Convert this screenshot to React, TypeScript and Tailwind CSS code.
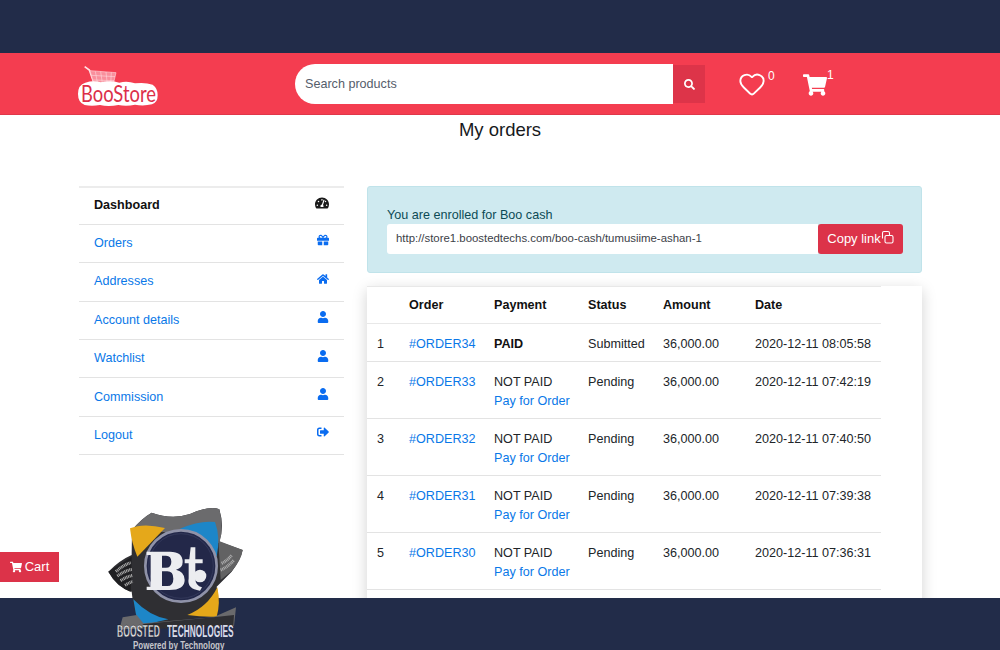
import { FaTachometerAlt, FaGift, FaHome, FaUser, FaSignOutAlt, FaShoppingCart, FaSearch } from "react-icons/fa";
import { Heart } from "lucide-react";

const nav = [
  { label: "Orders", Icon: FaGift },
  { label: "Addresses", Icon: FaHome },
  { label: "Account details", Icon: FaUser },
  { label: "Watchlist", Icon: FaUser },
  { label: "Commission", Icon: FaUser },
  { label: "Logout", Icon: FaSignOutAlt },
];

const orders = [
  ["1", "#ORDER34", "PAID", "Submitted", "2020-12-11 08:05:58"],
  ["2", "#ORDER33", "NOT PAID", "Pending", "2020-12-11 07:42:19"],
  ["3", "#ORDER32", "NOT PAID", "Pending", "2020-12-11 07:40:50"],
  ["4", "#ORDER31", "NOT PAID", "Pending", "2020-12-11 07:39:38"],
  ["5", "#ORDER30", "NOT PAID", "Pending", "2020-12-11 07:36:31"],
];

function StoreLogo() {
  return (
    <div className="relative w-[100px] h-[50px] shrink-0 mt-[2px]">
      <svg viewBox="0 0 300 150" className="absolute inset-0 w-[100px] h-[50px]">
        <path d="M44 20 L58 30 L78 86" fill="none" stroke="#ffe3e6" strokeWidth="5" />
        <path d="M60 32 L138 38 L130 72 L74 80 Z" fill="#f98f9c" stroke="#ffd0d6" strokeWidth="2" />
        <path d="M76 34 L84 78 M92 35 L98 76 M108 36 L112 74 M124 37 L122 73 M64 46 L135 50 M68 60 L132 62" fill="none" stroke="#ffe3e6" strokeWidth="1.5" />
        <path d="M46 68 Q70 60 92 67 Q120 60 148 68 Q172 62 195 70 Q225 66 248 74 Q264 86 263 106 Q263 128 246 133 Q220 139 195 134 Q170 140 145 135 Q115 141 90 135 Q65 140 44 135 Q24 128 24 102 Q24 74 46 68 Z" fill="#ffffff" />
      </svg>
      <span className="absolute left-[11px] top-[21px] text-[23px] leading-[24px] text-[#dc2f49] font-['Lato',sans-serif] scale-x-[0.8] origin-left whitespace-nowrap">BooStore</span>
    </div>
  );
}

function BoostedLogo() {
  return (
    <div className="absolute left-[100px] top-[500px] w-[150px] h-[150px] z-20 overflow-hidden">
      <svg viewBox="0 0 450 450" className="absolute inset-0 w-[150px] h-[150px]">
        <path d="M96 90 Q125 55 155 38 Q215 60 270 42 Q330 16 358 28 Q374 80 358 125 L428 150 Q422 180 395 215 L350 260 Q360 300 352 345 L120 380 Q100 330 95 275 Q50 262 25 215 Q60 180 95 165 Z" fill="#2f2f33" />
        <path d="M96 90 Q125 55 155 38 Q215 60 270 42 Q330 16 358 28 Q372 80 358 130 L250 100 Z" fill="#6b6b6d" />
        <path d="M355 122 L428 150 Q424 180 396 212 L362 240 Z" fill="#626263" />
        <path d="M95 170 L25 215 Q50 258 92 276 Z" fill="#1f1f22" />
        <g fill="none" stroke="#b0b0b0" strokeWidth="9" strokeDasharray="3 2">
          <path d="M48 215 Q70 195 92 188" />
          <path d="M52 228 Q75 212 96 208" />
          <path d="M62 242 Q80 230 98 226" />
          <path d="M75 256 Q88 248 98 244" />
          <path d="M365 190 Q385 180 395 165" />
          <path d="M362 210 Q385 200 402 180" />
        </g>
        <path d="M90 85 Q130 68 195 84 L112 170 Q95 130 90 85 Z" fill="#e5a81a" />
        <path d="M240 86 Q300 60 345 66 Q362 110 350 170 Q305 102 240 86 Z" fill="#1d86c8" />
        <path d="M100 298 Q150 350 205 358 L118 378 Q105 340 100 298 Z" fill="#1d86c8" />
        <path d="M352 262 Q362 310 350 350 Q310 352 262 345 Q322 322 352 262 Z" fill="#e5a81a" />
        <path d="M68 352 L110 345 L130 370 L340 352 L408 322 L402 378 L58 388 Z" fill="#6a6a6c" />
        <path d="M130 372 L340 352 L402 345 L400 378 L130 388 Z" fill="#2f2f33" />
        <circle cx="243" cy="198" r="107" fill="#222749" stroke="#8f92a8" strokeWidth="8" />
        <circle cx="243" cy="198" r="97" fill="#232849" stroke="#3d4264" strokeWidth="2" />
        <path d="M140 155 H210 Q248 155 248 186 Q248 204 228 209 Q254 215 254 240 Q254 270 208 270 H140 V260 H152 V165 H140 Z M186 167 V203 H198 Q214 203 214 185 Q214 167 198 167 Z M186 214 V258 H202 Q220 258 220 236 Q220 214 202 214 Z" fill="#ecedf0" fillRule="evenodd" />
        <path d="M272 142 H286 V178 H308 V190 H286 V236 Q286 256 306 262 L300 272 Q260 268 266 235 V190 H254 V178 H268 Z" fill="#ecedf0" />
        <circle cx="300" cy="228" r="19" fill="#ecedf0" />
      </svg>
      <span className="absolute left-[17px] top-[123px] w-[62px] text-[16px] leading-[18px] font-bold text-[#e9e9ee] font-['Liberation_Sans',sans-serif] scale-x-[0.53] origin-left whitespace-nowrap tracking-[0.3px] [-webkit-text-stroke:0.4px_#111]">BOOSTED</span>
      <span className="absolute left-[67px] top-[123px] w-[70px] text-[16px] leading-[18px] font-bold text-[#d9dbe8] font-['Liberation_Sans',sans-serif] scale-x-[0.52] origin-left whitespace-nowrap">TECHNOLOGIES</span>
      <span className="absolute left-[33px] top-[141px] text-[10px] leading-[10px] font-bold text-[#c6c6cc] font-['Liberation_Sans',sans-serif] scale-x-[0.8] origin-left whitespace-nowrap">Powered by Technology</span>
    </div>
  );
}

export default function App() {
  return (
    <div className="relative h-[650px] w-[1000px] overflow-hidden flex flex-col bg-white font-['Liberation_Sans',sans-serif] text-[12.6px] text-[#212529]">
      <div className="h-[53px] shrink-0 bg-[#222c49]" />
      <header className="h-[62px] shrink-0 bg-[#f43d50] border-b border-[#e0374a] flex items-center pl-[70px]">
        <StoreLogo />
        <div className="ml-[125px] flex w-[410px] h-[40px] items-center mt-[1px]">
          <div className="flex-1 h-full bg-white rounded-l-[20px] pl-[10px] flex items-center text-[12.6px] text-[#555d6b]">Search products</div>
          <div className="w-[32px] h-[38px] bg-[#dd3449] text-white flex items-center justify-center">
            <FaSearch className="w-[11px] h-[11px]" />
          </div>
        </div>
        <div className="relative ml-[35px] text-white w-[37px] h-[30px]">
          <Heart size={28} strokeWidth={1.6} className="absolute left-[-2px] top-[1px]" />
          <span className="absolute left-[28px] top-[-2px] text-[12px]">0</span>
        </div>
        <div className="relative ml-[25px] text-white w-[37px] h-[30px]">
          <FaShoppingCart className="w-[24px] h-[22px] absolute left-[1px] top-[5px]" />
          <span className="absolute left-[25px] top-[-3px] text-[12px]">1</span>
        </div>
      </header>
      <main className="flex-1 min-h-0 overflow-hidden">
        <h1 className="text-center text-[18.5px] leading-[29px] text-[#17191c]">My orders</h1>
        <div className="flex pl-[79px] pt-[42px] gap-[23px]">
          <nav className="w-[265px] shrink-0 border-t-2 border-[#ececec]">
            <div className="h-[36.8px] pb-[1px] px-[15px] flex items-center justify-between border-b border-[#e3e3e3] font-bold text-[#111]">
              Dashboard
              <FaTachometerAlt className="w-[14px] h-[14px] mt-[-4px] text-[#1a1a1a]" />
            </div>
            {nav.map(({ label, Icon }) => (
              <div key={label} className="h-[38.4px] px-[15px] flex items-center justify-between border-b border-[#e3e3e3] text-[#0a78e8]">
                {label}
                <Icon className="w-[12px] h-[12px] mt-[-6px] text-[#0a6cf0]" />
              </div>
            ))}
          </nav>
          <section className="w-[555px] shrink-0">
            <div className="h-[87px] bg-[#cfeaf0] border border-[#c0e3ea] rounded-[3px] pt-[21px] px-[19px] text-[#0c4a55]">
              <div className="leading-[15px]">You are enrolled for Boo cash</div>
              <div className="flex h-[30px] w-[516px] mt-[1px]">
                <div className="flex-1 bg-white rounded-l-[3px] pl-[9px] flex items-center text-[11.4px] text-[#3c4148]">http://store1.boostedtechs.com/boo-cash/tumusiime-ashan-1</div>
                <button className="w-[85px] bg-[#dc3349] text-white rounded-[3px] flex items-center justify-center text-[13px]">
                  Copy link
                  <svg viewBox="0 0 13 14" className="w-[13px] h-[14px] mt-[-5px]" fill="none" stroke="currentColor" strokeWidth="1.1">
                    <rect x="4" y="5.5" width="8" height="7.5" rx="1.5" />
                    <path d="M1.5 8.5 V3 Q1.5 1.5 3 1.5 H7 Q8.5 1.5 8.5 3 V5.5" />
                  </svg>
                </button>
              </div>
            </div>
            <div className="mt-[13px] shadow-[0_4px_14px_rgba(0,0,0,0.18)] bg-white h-[330px]">
              <div className="w-[514px]">
                <div className="h-[38px] border-y border-[#e8e8e8] flex items-center font-bold text-[#111]">
                  <span className="w-[42px]" />
                  <span className="w-[85px]">Order</span>
                  <span className="w-[94px]">Payment</span>
                  <span className="w-[75px]">Status</span>
                  <span className="w-[92px]">Amount</span>
                  <span>Date</span>
                </div>
                {orders.map(([n, id, pay, status, date]) => (
                  <div key={id} className={`${pay === "PAID" ? "h-[38px]" : "h-[57px]"} pt-[11px] border-b border-[#e3e3e3] flex leading-[19px]`}>
                    <span className="w-[42px] pl-[10px]">{n}</span>
                    <span className="w-[85px] text-[#0a78e8]">{id}</span>
                    <span className="w-[94px]">
                      {pay === "PAID" ? <b className="text-[#111]">PAID</b> : <>NOT PAID<br /><span className="text-[#0a78e8]">Pay for Order</span></>}
                    </span>
                    <span className="w-[75px]">{status}</span>
                    <span className="w-[92px]">36,000.00</span>
                    <span>{date}</span>
                  </div>
                ))}
              </div>
            </div>
          </section>
        </div>
      </main>
      <footer className="h-[52px] shrink-0 bg-[#222c49] z-10" />
      <div className="absolute left-0 top-[552px] w-[59px] h-[30px] bg-[#dc3349] text-white flex items-center justify-center gap-[3px] text-[13px] z-20">
        <FaShoppingCart className="w-[12px] h-[12px]" /> Cart
      </div>
      <BoostedLogo />
    </div>
  );
}
